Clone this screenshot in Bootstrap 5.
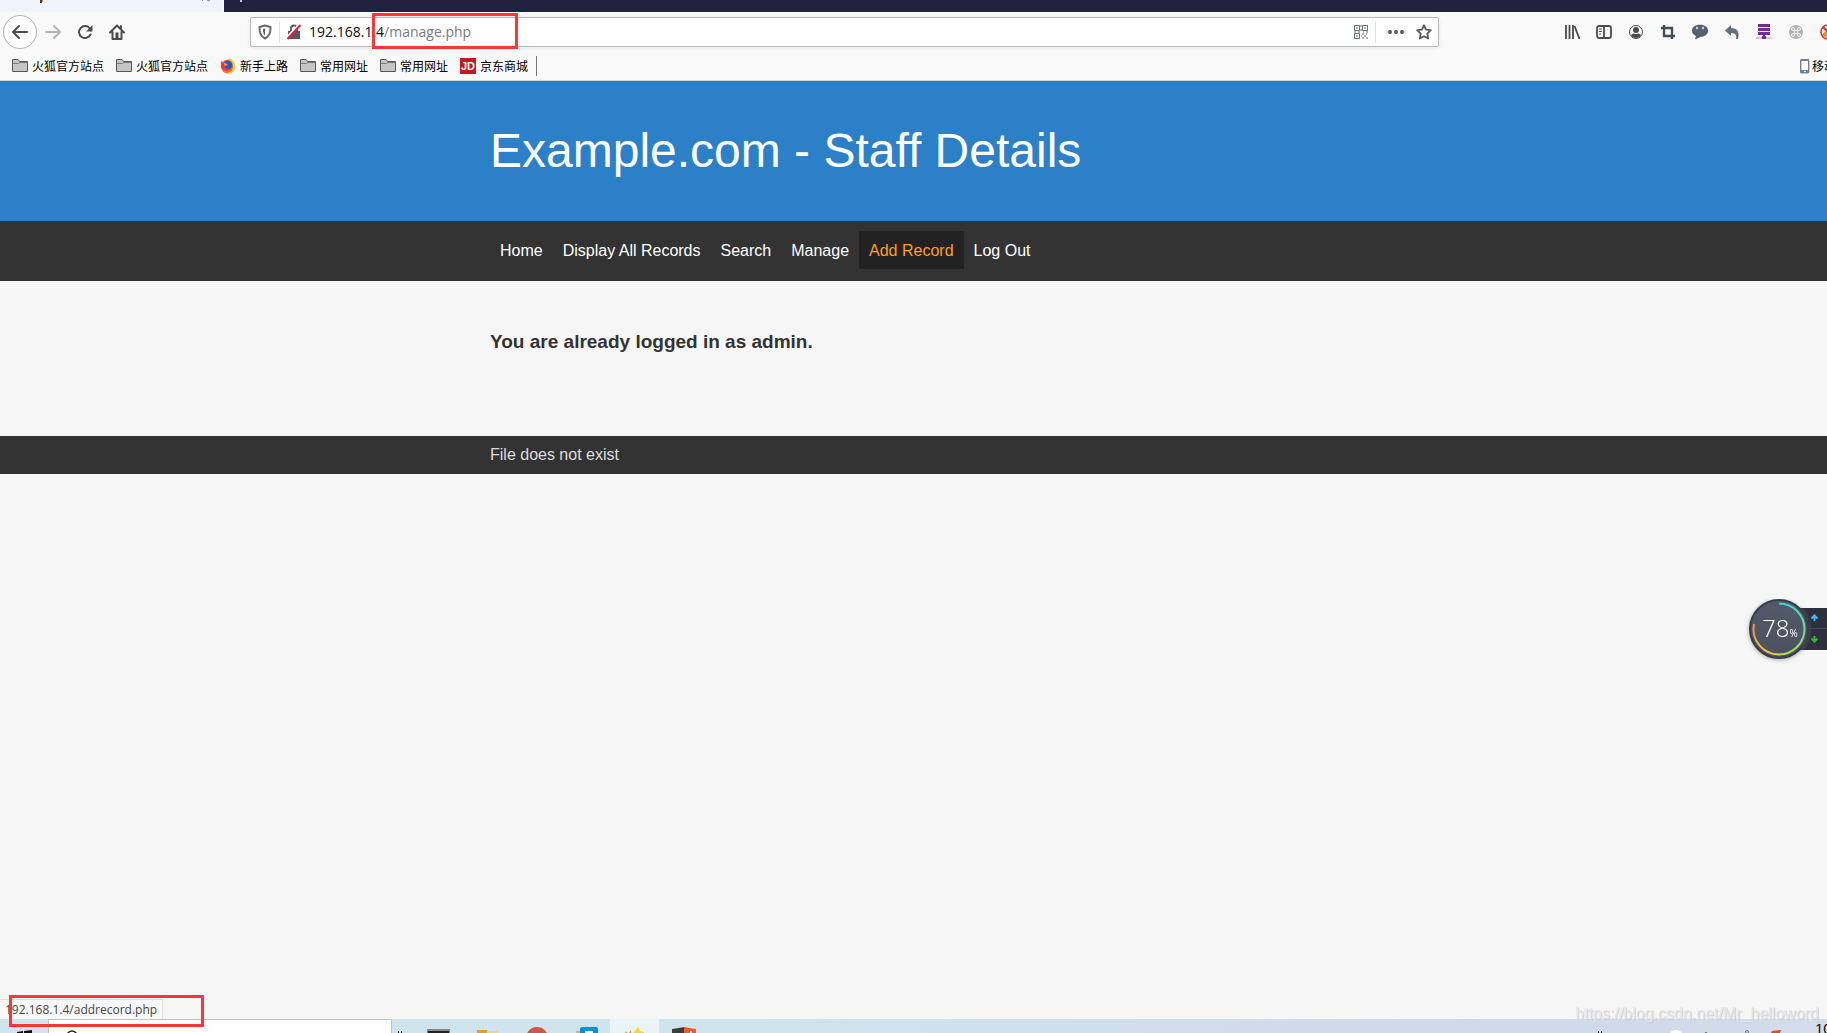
<!DOCTYPE html>
<html lang="zh-CN">
<head>
<meta charset="utf-8">
<meta name="viewport" content="width=device-width, initial-scale=1">
<title>Example.com - Staff Details</title>
<link rel="stylesheet" href="https://cdn.jsdelivr.net/npm/bootstrap@5.3.0/dist/css/bootstrap.min.css">
<style>
body{background:#f6f6f6;color:#333;font-family:"Liberation Sans",Arial,sans-serif;font-size:16px;line-height:24px;overflow:hidden}
svg{display:block;flex:none}
button{border:0;background:none;padding:0;flex:none}
.chrome-ui{font-family:"Open Sans","Noto Sans CJK SC",sans-serif;background:#f9f9fa}
.tabstrip{height:12px;background:#20223f;overflow:hidden}
.toolbar-main{height:40px}
.back-btn{width:34px;height:34px;border:1px solid #b3b3b3;border-radius:50%;background:#fff;margin-left:3px}
.spring{flex:0 1 117px}
.urlbar{height:30px;padding:0 6px 0 7px;border:1px solid #b9b9bb;border-radius:2px;background:#fff;font-size:14px;color:#0c0c0d;box-shadow:0 1px 4px rgba(0,0,0,.08)}
.urlbar input{border:0;outline:0;padding:0;background:none;color:#7a7a7c;min-width:0}
.url-group{gap:7px}
.url-actions{gap:12px}
.vline{width:1px;height:22px;background:#dedee0}
.bookmarks{height:29px;padding:0 0 1px 12px;border-bottom:1px solid #d4d4d8;font:12px/16px "Noto Sans CJK SC",sans-serif}
.bookmarks a,.bookmarks a:hover{color:#000;text-decoration:none;white-space:nowrap}
.bookmark-list{gap:12px}
.cut-icon{width:7px}.cut-text{width:15px}
.site-col{width:100%;max-width:847px;margin:0 auto}
.site-head{background:#2c80c8;color:#fff;padding:41px 0}
.site-head h1{font-size:48px;line-height:58px;font-weight:400;margin:0}
.site-nav{background:#333;padding:10px 0 12px}
.site-nav .nav-link{color:#fff;padding:8px 10px 6px}
.site-nav .nav-link:hover,.site-nav .nav-link.active{background:#222;color:#ffa011}
.message-area{padding:48px 0 82px}
.message-area h2{font-size:19px;line-height:25px;font-weight:700;margin:0}
.site-foot{background:#333;color:#ddd;padding:7px 0}
.taskbar{height:14px;background:linear-gradient(90deg,#cee5ed 0,#cfe4ed 40%,#d0d9e9 80%,#d3dceb 100%);overflow:hidden}
.start-slot{width:48px}
.task-search{width:344px;background:#fff;border:1px solid #c2c5c7;border-bottom:0;padding-left:17px}
.task-slot{width:49px}
.task-slot.current{background:#eaf4f8}
.link-status{left:0;bottom:14px;height:20px;padding:0 5px;border:1px solid #dfdfe1;border-width:1px 1px 0 0;background:#f9f9fa;font:12px/19px "Open Sans",sans-serif;color:#444;white-space:nowrap}
.red-mark{border:3px solid #ff3638;pointer-events:none}
.mark-url{left:372px;top:13px;width:146px;height:36px}
.mark-status{left:9px;bottom:6px;width:195px;height:32px}
.meter{right:0;top:58vh;width:84px;height:68px}
.meter-value{left:19px;top:11px;font:300 24px/36px "Open Sans",sans-serif;color:#fff;white-space:nowrap}
.meter-value small{font-size:10px;font-weight:400}
.watermark{right:8px;bottom:9px;color:#e5e6e8;text-shadow:1px 1px 1px #c9cbce;line-height:20px}
.clock{font-size:15px;line-height:16px;width:12px;color:#111;margin-top:2px}
</style>
<script src="https://cdn.jsdelivr.net/npm/bootstrap@5.3.0/dist/js/bootstrap.bundle.min.js"></script>
</head>
<body class="vh-100 d-flex flex-column">
<svg width="0" height="0" class="position-absolute" aria-hidden="true"><defs>
<symbol id="folder" viewBox="0 0 16 16"><path d="M.5 13.500V1.500h5.500l1.500 2h8v10z" fill="#c6c6c8" stroke="#58585a"/><path d="M1 5.500h5.500l1.500-1h7" fill="none" stroke="#77777a"/></symbol>
</defs></svg>

<div class="chrome-ui">
  <div class="tabstrip"><svg width="300" height="12"><path d="M0 0h222v12H0z" fill="#f0f4fa"/><path d="M40 0h2v3h-2z" fill="#333b55"/><path d="M42 0h1v2h-1z" fill="#d98a3a"/><path d="M203 0l-1 1M207 0l2 1M210 0l-1 1" stroke="#888"/><path d="M222 0h2v12h-2z" fill="#f9f9fa"/><path d="M240 0h2v2h-2z" fill="#c9cad5"/></svg></div>
  <div class="toolbar-main d-flex align-items-center">
    <button class="back-btn d-flex align-items-center justify-content-center" aria-label="Back"><svg width="18" height="16" viewBox="0 0 18 16" fill="none" stroke="#4b4b4d" stroke-width="2" stroke-linecap="round" stroke-linejoin="round"><path d="M16 8H2M8 2L2 8l6 6"/></svg></button>
    <button class="ms-2" aria-label="Forward"><svg width="16" height="16" viewBox="0 0 16 16" fill="none" stroke="#b5b5b7" stroke-width="2" stroke-linecap="round" stroke-linejoin="round"><path d="M1 8h14M9 2l6 6-6 6"/></svg></button>
    <button class="ms-3" aria-label="Reload"><svg width="16" height="16" viewBox="0 0 16 16"><path d="M13.500 10.500a6 6 0 1 1-.6-6" fill="none" stroke="#4b4b4d" stroke-width="2" stroke-linecap="round"/><path d="M15.500 1v6.500H9z" fill="#4b4b4d"/></svg></button>
    <button class="ms-3" aria-label="Home"><svg width="16" height="16" viewBox="0 0 16 16"><path d="M1 8.500L8 1.500l7 7M3.500 8v7h9V8M12 2v3" fill="none" stroke="#4b4b4d" stroke-width="2" stroke-linejoin="round" stroke-linecap="round"/><path d="M6.500 8.500h3V15h-3z" fill="#4b4b4d"/></svg></button>
    <div class="spring ms-2 me-n2"></div>
    <div class="urlbar d-flex align-items-center flex-fill">
      <div class="url-group d-flex align-items-center">
        <svg width="14" height="16" viewBox="0 0 14 16"><path d="M7 1.500L12.500 3c0 5-.5 9-5.500 11.500C2 12 1.500 8 1.500 3z" fill="none" stroke="#6a6a6c" stroke-width="2" stroke-linejoin="round"/><path d="M7 4.500v7C5.300 10 5 8 5 5z" fill="#58585a"/></svg>
        <span class="vline"></span>
        <svg width="14" height="16" viewBox="0 0 14 16"><path d="M4 7V4.500a3 3 0 0 1 6 0V7" fill="none" stroke="#5b5b5d" stroke-width="2"/><path d="M1 7h12v8H1z" fill="#5b5b5d"/><path d="M0 14L12 1" stroke="#fff" stroke-width="3"/><path d="M.5 15L13.500 1" stroke="#f0154a" stroke-width="2"/></svg>
      </div>
      <label class="ps-2" for="address">192.168.1.4</label><input class="flex-fill" id="address" type="text" value="/manage.php">
      <div class="url-group d-flex align-items-center">
        <svg width="14" height="14" viewBox="0 0 14 14" fill="none" stroke="#626b76"><path d="M.5.500h5v5h-5zM8.500.500h5v5h-5zM.5 8.500h5v5h-5z"/><path d="M2 3h2M10 3h2M2 11h2M7 0v2M7 4v2M0 7h2M4 7h2M9 7h1M12 7h2M8 9h2M12 9h1M10 11h2M7 11h1M8 13h2M12 13h2"/></svg>
        <span class="vline"></span>
      </div>
      <div class="url-actions d-flex ps-1 ms-2">
        <button aria-label="Page actions"><svg width="16" height="16" viewBox="0 0 16 16" fill="#58585a"><circle cx="2" cy="8" r="2"/><circle cx="8" cy="8" r="2"/><circle cx="14" cy="8" r="2"/></svg></button>
        <button aria-label="Bookmark"><svg width="16" height="16" viewBox="0 0 16 16"><path d="M8 1.200l2.100 4.400 4.700.6-3.500 3.400.9 4.900L8 12.200l-4.200 2.300.9-4.900L1.200 6.200l4.700-.6z" fill="none" stroke="#58585a" stroke-width="1.800" stroke-linejoin="round"/></svg></button>
      </div>
    </div>
    <div class="spring"></div>
    <div class="d-flex gap-3 ps-2">
      <button aria-label="Library"><svg width="16" height="16" viewBox="0 0 16 16" stroke="#4b4b4d" stroke-width="1.800"><path d="M2 1v14M5.500 1v14M9 1v14M10.500 2l5 13"/></svg></button>
      <button aria-label="Sidebars"><svg width="16" height="16" viewBox="0 0 16 16" fill="none" stroke="#4b4b4d" stroke-width="1.800"><rect x="1" y="2" width="14" height="12" rx="2"/><path d="M8 2v12"/><path d="M3 5h3M3 7.500h3M3 10h2" stroke-width="1"/></svg></button>
      <button aria-label="Account"><svg width="16" height="16" viewBox="0 0 16 16"><circle cx="8" cy="8" r="6.500" fill="none" stroke="#4b4b4d"/><circle cx="8" cy="6" r="3" fill="#4b4b4d"/><path d="M3 11q2-2 3-1.500 2 1 4 0 1-.5 3 1.500-1 3-5 3T3 11z" fill="#4b4b4d"/></svg></button>
      <button aria-label="Crop"><svg width="16" height="16" viewBox="0 0 16 16" fill="none" stroke="#404e5c" stroke-width="2.400"><path d="M4 1v11h11M1 4h11v11"/></svg></button>
      <button aria-label="Chat"><svg width="16" height="16" viewBox="0 0 16 16"><path d="M8 .8c5 0 8 2.500 8 6s-3 6-7 6l-6 2.700 1-3.500C1.500 11 0 9.300 0 6.800c0-3.500 3-6 8-6z" fill="#536271"/><circle cx="5" cy="4" r="1.200" fill="#cad0d6"/><circle cx="11" cy="4" r="1.200" fill="#cad0d6"/></svg></button>
      <button aria-label="Undo"><svg width="16" height="16" viewBox="0 0 16 16"><path d="M1 6.500L7 1v3c6 0 9 3.500 7 11h-2c1-4-1-6-5-6v3z" fill="#607080"/></svg></button>
      <button aria-label="Proxy"><svg width="16" height="16" viewBox="0 0 16 16"><path d="M2 0h12v3H2zM2 4h12v3H2zM2 8h12v3H2zM7 11h2v4H7z" fill="#752b91"/><path d="M0 14h6" stroke="#de8958"/><path d="M10 14h3" stroke="#79b455"/><path d="M13 14h3" stroke="#e3b43d"/><path d="M6 12h4v3H6z" fill="#752b91"/></svg></button>
      <button aria-label="Extension"><svg width="16" height="16" viewBox="0 0 16 16"><circle cx="8" cy="8" r="7" fill="#b2b2b2"/><path d="M6.500 6.500h3v3h-3zM6.500 6.500H5A1.500 1.500 0 1 1 6.500 5zM9.500 6.500V5A1.500 1.500 0 1 1 11 6.500zM9.500 9.500H11A1.500 1.500 0 1 1 9.500 11zM6.500 9.500V11A1.500 1.500 0 1 1 5 9.500z" fill="none" stroke="#f0f0f0"/></svg></button>
      <button class="cut-icon overflow-hidden" aria-label="Blocked"><svg width="16" height="16" viewBox="0 0 16 16"><circle cx="8" cy="8" r="7" fill="#fff" stroke="#d92a20" stroke-width="1.600"/><path d="M3 12q-1-4 5-5v7z" fill="#e99024"/><path d="M3 3l10 10" stroke="#d92a20" stroke-width="2"/></svg></button>
    </div>
  </div>
  <nav class="bookmarks d-flex align-items-center" aria-label="Bookmarks">
    <div class="bookmark-list d-flex">
      <a href="#" class="d-flex gap-1"><svg width="16" height="16"><use href="#folder"/></svg>火狐官方站点</a>
      <a href="#" class="d-flex gap-1"><svg width="16" height="16"><use href="#folder"/></svg>火狐官方站点</a>
      <a href="#" class="d-flex gap-1"><svg width="16" height="16" viewBox="0 0 16 16"><circle cx="8" cy="8.500" r="7" fill="#ff6b22"/><path d="M9 0c5 2 7 6 6 10s-5 6-8 5q6-1 6-7Q11 4 9 4z" fill="#ffc928"/><circle cx="8" cy="7" r="4.500" fill="#2659c5"/><path d="M1 3l3 2 3 1-2 2q0 3 4 3-2 3-5 1-4-2-3-9z" fill="#f33249"/><path d="M4 5l4 1-2 2-2-1z" fill="#ff9d22"/></svg>新手上路</a>
      <a href="#" class="d-flex gap-1"><svg width="16" height="16"><use href="#folder"/></svg>常用网址</a>
      <a href="#" class="d-flex gap-1"><svg width="16" height="16"><use href="#folder"/></svg>常用网址</a>
      <a href="#" class="d-flex gap-1"><svg width="16" height="16"><path d="M0 0h16v16H0z" fill="#c81623"/><text x="1" y="12" font-family="Liberation Sans" font-size="11" font-weight="700" fill="#fff">JD</text></svg>京东商城</a>
    </div>
    <svg class="ms-2" width="1" height="20"><path d="M0 0h1v20H0z" fill="#77777a"/></svg>
    <a href="#" class="ms-auto d-flex"><svg width="12" height="16" viewBox="0 0 12 16"><rect x=".7" y="1.700" width="8" height="13" rx="1" fill="#fff" stroke="#74808e" stroke-width="1.400"/><path d="M1 1h8v2H1zM1 12h8v3H1z" fill="#74808e"/><path d="M4 13h2v1H4z" fill="#fff"/></svg><span class="cut-text overflow-hidden">移动</span></a>
  </nav>
</div>

<header class="site-head"><div class="site-col"><h1>Example.com - Staff Details</h1></div></header>
<nav class="site-nav"><ul class="nav site-col">
  <li class="nav-item"><a class="nav-link" href="#">Home</a></li>
  <li class="nav-item"><a class="nav-link" href="#">Display All Records</a></li>
  <li class="nav-item"><a class="nav-link" href="#">Search</a></li>
  <li class="nav-item"><a class="nav-link" href="#">Manage</a></li>
  <li class="nav-item"><a class="nav-link active" href="#">Add Record</a></li>
  <li class="nav-item"><a class="nav-link" href="#">Log Out</a></li>
</ul></nav>
<main class="message-area"><div class="site-col"><h2>You are already logged in as admin.</h2></div></main>
<footer class="site-foot"><div class="site-col">File does not exist</div></footer>

<div class="taskbar d-flex mt-auto">
  <div class="start-slot"><svg width="48" height="14"><path d="M17 13l6-1v2h-6zM24 12l8-1v3h-8z" fill="#111"/></svg></div>
  <div class="task-search"><svg width="12" height="14"><circle cx="6" cy="16" r="5" fill="none" stroke="#222" stroke-width="1.500"/></svg></div>
  <svg width="22" height="14"><path d="M6 12h1v2H6zM9 12h1v2H9z" fill="#111"/></svg>
  <div class="task-slot"><svg width="49" height="14"><path d="M13 10h23v4H13z" fill="#888"/><path d="M14 12h21v2H14z" fill="#222"/></svg></div>
  <div class="task-slot"><svg width="49" height="14"><path d="M14 11h10l1 2h10v1H14z" fill="#e3a21a"/><path d="M24 12h11v2H24z" fill="#f8d66b"/></svg></div>
  <div class="task-slot"><svg width="49" height="14"><circle cx="25" cy="19" r="11" fill="#db5145"/></svg></div>
  <div class="task-slot"><svg width="49" height="14"><path d="M15 14v-2h6v2z" fill="#c9b98d"/><path d="M19 14v-4q0-2 2-2h14q2 0 2 2v4z" fill="#0b91d1"/><path d="M24 12h8v2h-8z" fill="#fff"/></svg></div>
  <div class="task-slot current"><svg width="49" height="14"><path d="M15 14l1-2 1 2zM19 14l2-3v3z" fill="#f58b2b"/><path d="M23 14l5-6 2 4 4 1v1z" fill="#ffd91e"/></svg></div>
  <div class="task-slot"><svg width="49" height="14"><path d="M13 14v-4l13-2v6z" fill="#3c3c3c"/><path d="M25 14V8l12 2v4z" fill="#f3592b"/><path d="M31 12h2v2h-2z" fill="#fff"/></svg></div>
  <svg class="ms-auto" width="220" height="14"><path d="M3 12h1v2H3zM6 12h1v2H6z" fill="#111"/><ellipse cx="81" cy="15" rx="6" ry="4" fill="#fff"/><path d="M110 13h2v1h-2z" fill="#777"/><circle cx="152" cy="13" r="1.500" fill="none" stroke="#777"/><path d="M176 14l1-2 9-1-1 3z" fill="#f4480d"/></svg>
  <span class="clock overflow-hidden text-nowrap">10</span>
</div>

<div class="link-status position-fixed">192.168.1.4/addrecord.php</div>
<div class="watermark position-fixed">https://blog.csdn.net/Mr_helloword</div>
<div class="red-mark mark-url position-fixed"></div>
<div class="red-mark mark-status position-fixed"></div>

<div class="meter position-fixed">
  <svg width="84" height="68" viewBox="0 0 84 68"><defs><linearGradient id="disc" x2="0" y2="1"><stop stop-color="#535a69"/><stop offset="1" stop-color="#4b5160"/></linearGradient><linearGradient id="ring-right" x2="0" y2="1"><stop stop-color="#36d9df"/><stop offset="1" stop-color="#b5d85a"/></linearGradient><linearGradient id="ring-left" x2="1" y2="1"><stop stop-color="#ef8f50"/><stop offset="1" stop-color="#e8d645"/></linearGradient><filter id="soft" x="-20%" y="-20%" width="140%" height="140%"><feGaussianBlur stdDeviation="2"/></filter></defs>
  <path d="M50 9h34v42H50z" fill="#2d313d"/><path d="M66 29.500h18" stroke="#454a56"/>
  <circle cx="36" cy="31" r="30" fill="#777" opacity=".6" filter="url(#soft)"/>
  <circle cx="36" cy="30" r="29" fill="url(#disc)" stroke="#393d48" stroke-width="2"/>
  <path d="M36 4.500a25.500 25.500 0 0 1 0 51" fill="none" stroke="url(#ring-right)" stroke-width="2"/><path d="M36 55.500a25.500 25.500 0 0 1-25-30.500" fill="none" stroke="url(#ring-left)" stroke-width="2"/>
  <path d="M71.500 22v-5M68.500 19.500l3-3 3 3" fill="none" stroke="#4bb5ef" stroke-width="2"/><path d="M71.500 37v5M68.500 39.500l3 3 3-3" fill="none" stroke="#2eb936" stroke-width="2"/></svg>
  <div class="meter-value position-absolute">78<small>%</small></div>
</div>
</body>
</html>
